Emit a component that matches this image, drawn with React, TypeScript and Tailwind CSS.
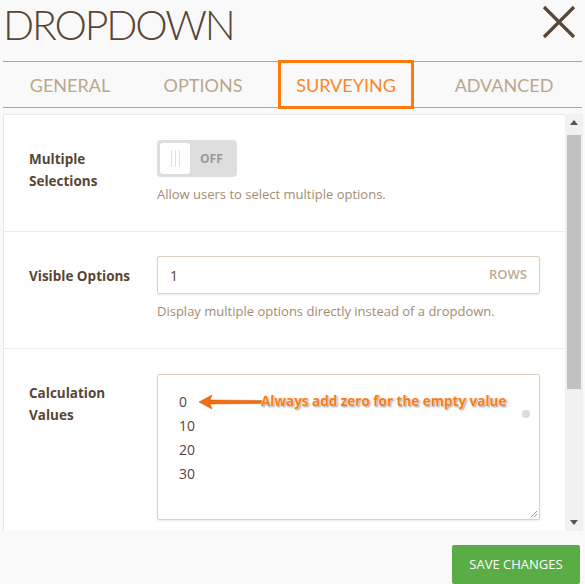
export default function App() {
  const tabs = [
    { label: "GENERAL", cls: "w-[134px]" },
    { label: "OPTIONS", cls: "w-[132px] mr-[9px]" },
    { label: "SURVEYING", cls: "w-[136px]", active: true },
    { label: "ADVANCED", cls: "flex-1 pl-[12px]" },
  ];

  return (
    <div className="relative h-[584px] w-[585px] overflow-hidden bg-[#f9f9f9] font-['Lato',sans-serif]">
      {/* header */}
      <div className="flex h-[61px] items-start justify-between pl-[3px] pr-[8px]">
        <h1 className="pt-[1px] text-[41px] font-light leading-[48px] tracking-[-2.2px] text-[#574635]">DROPDOWN</h1>
        <svg width="36" height="36" viewBox="0 0 36 36" className="mt-[4px]">
          <path d="M3 3 L33 33 M33 3 L3 33" stroke="#574635" strokeWidth="3.2" />
        </svg>
      </div>

      {/* tabs */}
      <div className="mx-[3px] flex h-[47px] border-y border-[#b5a390]">
        {tabs.map((t) =>
          t.active ? (
            <div
              key={t.label}
              className={`${t.cls} -my-[2px] flex items-center justify-center border-[3px] border-[#ff7a0d] pt-[2px] text-[18px] text-[#f9872c]`}
            >
              {t.label}
            </div>
          ) : (
            <div key={t.label} className={`${t.cls} flex items-center justify-center pt-[2px] text-[18px] text-[#baa68f]`}>
              {t.label}
            </div>
          )
        )}
      </div>

      {/* scroll panel */}
      <div className="ml-[3px] mt-[6px] flex h-[417px] w-[580px]">
        <div className="flex-1 border-l border-t border-[#e8e8e8] bg-white font-['Open_Sans',sans-serif]">
          {/* row 1 */}
          <div className="flex h-[117px] border-b border-[#ebebeb]">
            <div className="w-[153px] pl-[25px] pt-[33px] text-[13.5px] font-bold leading-[22px] text-[#574635]">
              Multiple
              <br />
              Selections
            </div>
            <div className="pt-[25px]">
              <div className="flex h-[37px] w-[80px] items-center rounded-[4px] bg-[#dedede] p-[3px]">
                <div className="flex h-[31px] w-[30px] items-center justify-center gap-[3px] rounded-[3px] bg-white">
                  <span className="h-[17px] w-px bg-[#e0e0e0]" />
                  <span className="h-[17px] w-px bg-[#e0e0e0]" />
                  <span className="h-[17px] w-px bg-[#e0e0e0]" />
                </div>
                <span className="ml-[10px] text-[12px] font-bold text-[#9a9a9a]">OFF</span>
              </div>
              <p className="mt-[8px] text-[13px] text-[#a48c72]">Allow users to select multiple options.</p>
            </div>
          </div>

          {/* row 2 */}
          <div className="flex h-[117px] border-b border-[#ebebeb]">
            <div className="w-[153px] pl-[25px] pt-[33px] text-[13.5px] font-bold leading-[22px] text-[#574635]">
              Visible Options
            </div>
            <div className="pt-[24px]">
              <div className="flex h-[38px] w-[383px] items-center justify-between rounded-[2px] border border-[#ddcfc2] px-[12px] shadow-[0_1px_2px_rgba(0,0,0,0.08)]">
                <span className="text-[14px] text-[#574635]">1</span>
                <span className="text-[13px] font-semibold text-[#c0aa92]">ROWS</span>
              </div>
              <p className="mt-[8px] text-[13px] text-[#a48c72]">Display multiple options directly instead of a dropdown.</p>
            </div>
          </div>

          {/* row 3 */}
          <div className="flex">
            <div className="w-[153px] pl-[25px] pt-[33px] text-[13.5px] font-bold leading-[22px] text-[#574635]">
              Calculation
              <br />
              Values
            </div>
            <div className="pt-[25px]">
              <div className="relative h-[146px] w-[383px] rounded-[2px] border border-[#ddcfc2] pl-[21px] pt-[15px] shadow-[0_1px_2px_rgba(0,0,0,0.08)]">
                <div className="text-[14px] leading-[24px] text-[#574635]">
                  <div>0</div>
                  <div>10</div>
                  <div>20</div>
                  <div>30</div>
                </div>
                <svg width="66" height="16" viewBox="0 0 66 16" className="absolute left-[40px] top-[19px]">
                  <path d="M1 8 L14 1 L12 6 L64 6.5 L64 9.5 L12 10 L14 15 Z" fill="#f26d0f" stroke="#c8560a" strokeWidth="0.5" />
                </svg>
                <span className="absolute left-[103px] top-[16px] text-[13.5px] font-bold text-[#fb7b12] [text-shadow:0_0_1px_#fff,0_0_2px_#fff,1px_1px_2px_#777]">
                  Always add zero for the empty value
                </span>
                <span className="absolute left-[364px] top-[35px] h-[8px] w-[8px] rounded-full bg-[#dcdcdc]" />
                <svg width="8" height="8" viewBox="0 0 8 8" className="absolute bottom-[1px] right-[1px]">
                  <path d="M1 7 L7 1 M4 7 L7 4" stroke="#999" strokeWidth="1" />
                </svg>
              </div>
            </div>
          </div>
        </div>

        {/* scrollbar */}
        <div className="flex w-[18px] flex-col items-center bg-[#f1f1f1]">
          <div className="flex h-[17px] items-center justify-center">
            <svg width="8" height="5" viewBox="0 0 8 5">
              <path d="M0 5 L4 0 L8 5 Z" fill="#555" />
            </svg>
          </div>
          <div className="mt-[4px] h-[254px] w-[14px] bg-[#c1c1c1]" />
          <div className="flex-1" />
          <div className="flex h-[17px] items-center justify-center">
            <svg width="8" height="5" viewBox="0 0 8 5">
              <path d="M0 0 L8 0 L4 5 Z" fill="#555" />
            </svg>
          </div>
        </div>
      </div>

      {/* footer */}
      <div className="flex justify-end pr-[5px] pt-[14px]">
        <button className="h-[39px] w-[128px] rounded-[2px] bg-[#5aac44] font-['Open_Sans',sans-serif] text-[13px] text-white">
          SAVE CHANGES
        </button>
      </div>
    </div>
  );
}
